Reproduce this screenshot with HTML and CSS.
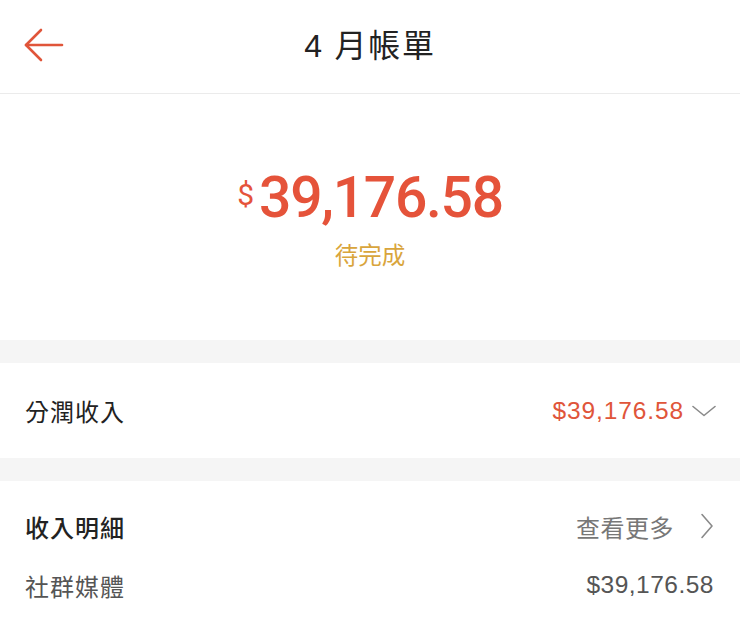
FILE: index.html
```html
<!DOCTYPE html>
<html lang="zh-Hant">
<head>
<meta charset="utf-8">
<title>4 月帳單</title>
<link rel="stylesheet" href="styles.css">
</head>
<body>
<div class="page">
  <header class="nav">
    <button class="back" aria-label="返回">
      <svg width="40" height="34" viewBox="0 0 40 34" fill="none" stroke="#e0553a" stroke-width="2.6" stroke-linecap="round" stroke-linejoin="round">
        <path d="M2 17 H38"/>
        <path d="M17 2 L2 17 L17 32"/>
      </svg>
    </button>
    <h1 class="title">4 月帳單</h1>
    <span class="nav-spacer"></span>
  </header>

  <section class="summary">
    <div class="total"><span class="cur">$</span><span class="num">39,176.58</span></div>
    <div class="status">待完成</div>
  </section>

  <div class="gap"></div>

  <section class="row row-main">
    <span class="label">分潤收入</span>
    <span class="right">
      <span class="amount red">$39,176.58</span>
      <svg class="chev-down" width="24" height="12" viewBox="0 0 24 12" fill="none" stroke="#8a8a8a" stroke-width="1.6" stroke-linecap="round" stroke-linejoin="round">
        <path d="M1 1.5 L12 10.5 L23 1.5"/>
      </svg>
    </span>
  </section>

  <div class="gap"></div>

  <section class="detail">
    <div class="detail-head">
      <span class="label strong">收入明細</span>
      <span class="right">
        <span class="more">查看更多</span>
        <svg class="chev-right" width="14" height="26" viewBox="0 0 14 26" fill="none" stroke="#8a8a8a" stroke-width="1.6" stroke-linecap="round" stroke-linejoin="round">
          <path d="M2 1.5 L12 13 L2 24.5"/>
        </svg>
      </span>
    </div>
    <div class="detail-item">
      <span class="label grey">社群媒體</span>
      <span class="amount grey">$39,176.58</span>
    </div>
  </section>
</div>
</body>
</html>
```

FILE: styles.css
```css
* { box-sizing: border-box; }
html, body { margin: 0; padding: 0; background: #fff; }
body {
  font-family: "Liberation Sans", "Noto Sans CJK TC", sans-serif;
  color: #222;
  width: 740px;
  height: 620px;
  overflow: hidden;
}
.page { display: flex; flex-direction: column; }

.nav {
  height: 94px;
  border-bottom: 1px solid #ebebeb;
  display: grid;
  grid-template-columns: 100px 1fr 100px;
  align-items: center;
  padding-bottom: 8px;
}
.back {
  border: 0;
  background: none;
  padding: 0 0 0 24px;
  margin-top: 5px;
  display: flex;
  align-items: center;
  height: 34px;
  cursor: pointer;
}
.title {
  margin: 0;
  text-align: center;
  font-weight: 400;
  font-size: 32px;
  letter-spacing: 1.8px;
  color: #222;
  font-family: "Liberation Sans", "Noto Sans CJK TC", sans-serif;
}

.summary {
  height: 246px;
  display: flex;
  flex-direction: column;
  align-items: center;
  padding-top: 75px;
}
.total {
  display: flex;
  align-items: flex-start;
  color: #e5533a;
  line-height: 1;
}
.cur {
  font-size: 30px;
  margin-top: 11px;
  margin-right: 5px;
  font-weight: 400;
  font-family: Roboto, "Liberation Sans", sans-serif;
}
.num {
  font-size: 57px;
  font-weight: 500;
  letter-spacing: -1.3px;
  font-family: Roboto, "Liberation Sans", sans-serif;
}
.status {
  margin-top: 16px;
  font-size: 23.5px;
  color: #d9a53c;
  line-height: 1.2;
}

.gap { height: 23px; background: #f5f5f5; }

.row {
  display: flex;
  align-items: center;
  justify-content: space-between;
  padding: 0 24px 0 25px;
}
.row-main { height: 95px; }
.label { font-size: 24px; color: #222; letter-spacing: 1px; }
.label.strong { font-weight: 500; }
.label.grey { color: #555; }
.right { display: flex; align-items: center; }
.amount { font-size: 24.5px; letter-spacing: 0.9px; }
.amount.red { color: #e0553a; }
.amount.grey { color: #555; letter-spacing: 0.5px; }
.chev-down { margin-left: 8px; }

.detail { padding: 0 26px 0 25px; }
.detail-head {
  height: 90px;
  display: flex;
  align-items: center;
  justify-content: space-between;
}
.more { font-size: 24px; color: #777; letter-spacing: 0.5px; }
.chev-right { margin-left: 26px; }
.detail-item {
  height: 28px;
  display: flex;
  align-items: center;
  justify-content: space-between;
}
```
